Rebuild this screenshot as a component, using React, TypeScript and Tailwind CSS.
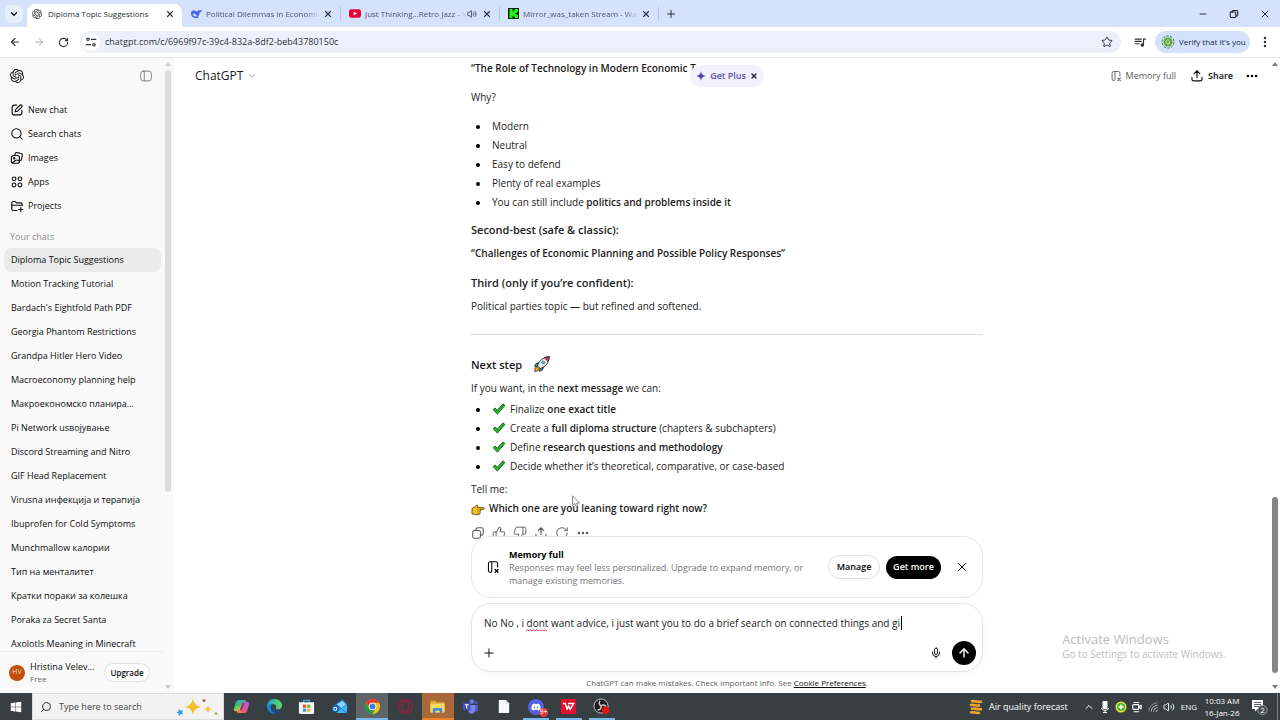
import type { ReactNode } from "react";
import {
  ArrowLeft,
  ArrowRight,
  ArrowUp,
  ChevronDown,
  ChevronUp,
  Ellipsis,
  EllipsisVertical,
  Mic,
  Minus,
  Plus,
  RotateCw,
  Search,
  Star,
  ThumbsDown,
  ThumbsUp,
  Volume2,
  X,
} from "lucide-react";
import { SiOpenai } from "react-icons/si";
import { FaDiscord, FaWindows } from "react-icons/fa";
import { MdOutlineQueueMusic } from "react-icons/md";

type IconProps = { className?: string; children: ReactNode; width?: number };

function Line({ className, children, width = 1.6 }: IconProps) {
  return (
    <svg viewBox="0 0 20 20" fill="none" stroke="currentColor" strokeWidth={width} strokeLinecap="round" strokeLinejoin="round" className={className} aria-hidden="true">
      {children}
    </svg>
  );
}

const PanelIcon = () => (
  <Line className="size-3.5" width={1.3}>
    <rect x="2.5" y="3" width="15" height="14" rx="3.5" />
    <path d="M7.5 3v14" />
  </Line>
);

const ComposeIcon = () => (
  <Line className="size-3.5">
    <path d="M9.500 3H6.600A3.600 3.600 0 0 0 3 6.600v6.800A3.600 3.600 0 0 0 6.600 17h6.800a3.600 3.600 0 0 0 3.600-3.600v-2.900" />
    <path d="M14.200 3.200a1.800 1.800 0 0 1 2.600 2.600l-5.900 5.900-3.500.9.900-3.500z" />
  </Line>
);

const ImagesIcon = () => (
  <Line className="size-3.5">
    <path d="M7 5.200 7.300 4a2.200 2.200 0 0 1 2.600-1.700l6 1.200a2.200 2.200 0 0 1 1.700 2.600l-1.200 6a2.200 2.200 0 0 1-1.400 1.700" />
    <rect x="2" y="6.500" width="11.500" height="11" rx="3" />
    <circle cx="6" cy="10.200" r="1" />
    <path d="m4 16.500 3.200-2.600c2.600-2 4.600-1 6.200.6" />
  </Line>
);

const AppsIcon = () => (
  <Line className="size-3.5">
    <circle cx="5.800" cy="5.500" r="2.700" />
    <circle cx="14.200" cy="5.500" r="2.700" />
    <circle cx="5.800" cy="14.200" r="2.700" />
    <circle cx="14.200" cy="14.200" r="2.700" />
  </Line>
);

const ProjectsIcon = () => (
  <Line className="size-3.5">
    <path d="M10 16.500H5A2.500 2.500 0 0 1 2.500 14V5.500A2 2 0 0 1 4.500 3.500h2.800l2 2H15a2.500 2.500 0 0 1 2.500 2.500v1" />
    <path d="M2.500 9h15M15.500 12v6M12.500 15h6" />
  </Line>
);

const MemoryIcon = ({ className }: { className: string }) => (
  <Line className={className} width={1.5}>
    <path d="M6.500 17.500H6a2.500 2.500 0 0 1-2.500-2.500V5A2.500 2.500 0 0 1 6 2.500h8A2.500 2.500 0 0 1 16.500 5v5" />
    <path d="M6.500 17.500A1.800 1.800 0 0 0 8.300 15.700V2.500" />
    <path d="m13 13.500 4.200 4.200m0-4.200L13 17.700" strokeWidth={1.9} />
  </Line>
);

const ShareIcon = ({ className }: { className: string }) => (
  <Line className={className}>
    <path d="M10 12.500V2.800M6 6.500l4-4 4 4M2.800 12v2.500a2.500 2.500 0 0 0 2.500 2.500h9.400a2.500 2.500 0 0 0 2.500-2.500V12" />
  </Line>
);

const CopyIcon = () => (
  <Line className="size-3.5" width={1.5}>
    <path d="M7 6.500V5a2.500 2.500 0 0 1 2.500-2.500H15A2.500 2.500 0 0 1 17.500 5v5.500A2.500 2.500 0 0 1 15 13h-1.500" />
    <rect x="2.500" y="6.500" width="11" height="11" rx="2.500" />
  </Line>
);

const CheckMark = () => (
  <svg viewBox="0 0 14 14" className="mr-1 inline-block size-3.5 align-[-3px]" aria-label="check" role="img">
    <path d="M1.200 7.800 3.100 6l2.200 2.200L11 1.900l1.900 1.500-7.400 8.700z" fill="#22b52c" stroke="#14691a" strokeWidth="1" strokeLinejoin="round" />
  </svg>
);

const Rocket = () => (
  <svg viewBox="0 0 18 18" className="ml-2 inline-block size-[18px] align-[-4px]" aria-label="rocket" role="img">
    <path d="M5.500 7.500 2.300 9.200 1.800 12l3-1zM10.700 12.500l-1.900 3.200-2.600.5.900-3.200z" fill="#1fa7c4" stroke="#222" strokeWidth=".8" strokeLinejoin="round" />
    <path d="M4 11.500c-1.700.8-2.400 2.600-2.400 4.900 2.300 0 4.100-.7 4.900-2.400z" fill="#f7a21b" stroke="#222" strokeWidth=".7" />
    <path d="M4.500 10.800C6 6.200 9.600 2 16.300 1.600 16 8.300 12 12 7.300 13.600z" fill="#e9eef2" stroke="#222" strokeWidth=".9" strokeLinejoin="round" />
    <path d="M11.400 2.900c1.500-.8 3.200-1.200 4.900-1.300-.1 1.800-.5 3.500-1.200 4.900z" fill="#e0315a" stroke="#222" strokeWidth=".6" />
    <circle cx="10.300" cy="7.500" r="1.500" fill="#46c5dc" stroke="#47606b" strokeWidth=".6" />
  </svg>
);

const PointingHand = () => (
  <svg viewBox="0 0 14 12" className="mr-1 inline-block h-3 w-3.5 align-[-4px]" aria-label="pointing right" role="img">
    <path d="M1 4.500 3.500 3l2-1.700c.8-.5 1.700.2 1.200 1L6 3.600h6.300c1.300 0 1.300 1.900 0 1.900H9c.9.300.8 1.600 0 1.800.7.400.5 1.500-.2 1.700.4.600 0 1.600-.9 1.600H4.200L1 9.800z" fill="#fcc21b" stroke="#4a3510" strokeWidth=".8" strokeLinejoin="round" />
    <path d="M6.300 5.500H9M6.300 7.300H9M6.300 9h2.400" stroke="#8a6412" strokeWidth=".6" />
  </svg>
);

const TabClose = ({ label }: { label: string }) => (
  <button aria-label={label} className="flex size-4 shrink-0 items-center justify-center text-[#27303f]">
    <X className="size-2.5" strokeWidth={2.6} />
  </button>
);

const WhaleLogo = () => (
  <svg viewBox="0 0 12 12" className="size-3 shrink-0" aria-hidden="true">
    <path d="M1 4.500C1.500 2.500 4 2 6 3c1 .6 1.700.9 2 .2.200-.8 0-1.300.6-1.500.4.900 1 .9 1.900.5.600-.3 1-.5 1.200-.3-.1 1.600-.8 2.300-2 2.700-.2 2-1 3.400-2 4.200l1.200.9c-1.500.7-2.800.3-3.900.2C2.500 9.700.6 7.200 1 4.500z" fill="#4d63f0" />
    <path d="M2.800 6.200c.6-1 2-1 3 .2.600.8.9 1.600 1.600 1.700-1.800.9-4.300-.1-4.600-1.900z" fill="#dbe5fd" />
  </svg>
);

const YoutubeLogo = () => (
  <svg viewBox="0 0 12 9" className="h-[9px] w-3 shrink-0" aria-hidden="true">
    <rect width="12" height="8.500" y=".2" rx="2.200" fill="#e8033a" />
    <path d="M4.700 2.500v3.900l3.300-2z" fill="#fff" />
  </svg>
);

const KickLogo = () => (
  <svg viewBox="0 0 11 11" className="size-[11px] shrink-0" aria-hidden="true">
    <rect width="11" height="11" fill="#06280a" />
    <path d="M1.500 1h3v2.300h1V2.200h1.200V1H10v3H8.800v1H7.600v1h1.200v1H10v3H6.700V8.800H5.500V7.700h-1V10h-3z" fill="#27f01c" />
  </svg>
);

function BrowserTab({ icon, title, audio }: { icon: ReactNode; title: string; audio?: boolean }) {
  return (
    <div className="flex w-[159px] min-w-0 items-center border-r border-[#b1c3e6] pl-2 pr-1">
      {icon}
      <a href="#" className="ml-1 min-w-0 flex-1 overflow-hidden text-[8px] leading-3 whitespace-nowrap text-[#4a5568] [mask-image:linear-gradient(to_right,black_88%,transparent)]">
        {title}
      </a>
      {audio && <Volume2 className="mr-0.5 size-2.5 shrink-0 text-[#3b4658]" strokeWidth={2.2} />}
      <TabClose label={`Close ${title}`} />
    </div>
  );
}

function TabStrip() {
  return (
    <div className="flex h-[27px] shrink-0 items-stretch bg-[#d5e2fb]">
      <div className="flex w-[27px] items-center justify-center">
        <button aria-label="Search tabs" className="flex size-[18px] items-center justify-center rounded-md bg-[#e6effd]">
          <ChevronDown className="size-2.5" strokeWidth={3} />
        </button>
      </div>
      <div className="mt-1 flex w-[155px] items-center rounded-t-lg bg-white pb-1 pl-[5px] pr-1">
        <SiOpenai className="size-2.5 shrink-0 text-[#333]" />
        <a href="#" className="ml-1.5 flex-1 text-[8px] whitespace-nowrap text-[#2b2f36]">Diploma Topic Suggestions</a>
        <TabClose label="Close tab" />
      </div>
      <div className="flex py-[7px]">
        <BrowserTab icon={<WhaleLogo />} title="Political Dilemmas in Economic" />
        <BrowserTab icon={<YoutubeLogo />} title="Just Thinking...Retro Jazz - Y" audio />
        <BrowserTab icon={<KickLogo />} title="Mirror_was_taken Stream - Wat" />
      </div>
      <button aria-label="New tab" className="flex w-6 items-center justify-center text-[#27303f]">
        <Plus className="size-3" strokeWidth={2} />
      </button>
      <div className="ml-auto flex text-[#15171c]">
        <button aria-label="Minimize" className="flex w-[31px] items-center justify-center"><Minus className="size-2.5" /></button>
        <button aria-label="Restore" className="flex w-[31px] items-center justify-center">
          <Line className="size-2.5" width={2}>
            <rect x="2.500" y="6" width="11" height="11" rx="1" />
            <path d="M6.500 6V4a1 1 0 0 1 1-1h9a1 1 0 0 1 1 1v9a1 1 0 0 1-1 1h-2.500" />
          </Line>
        </button>
        <button aria-label="Close window" className="flex w-[31px] items-center justify-center"><X className="size-3" strokeWidth={1.8} /></button>
      </div>
    </div>
  );
}

function Toolbar() {
  return (
    <div className="flex h-[31px] shrink-0 items-center border-b border-[#e1e3ea] bg-white pl-[3px]">
      <button aria-label="Back" className="flex w-6 justify-center text-[#30343b]"><ArrowLeft className="size-3" strokeWidth={2.2} /></button>
      <button aria-label="Forward" className="flex w-6 justify-center text-[#a4a7ad]"><ArrowRight className="size-3" strokeWidth={2} /></button>
      <button aria-label="Reload" className="flex w-6 justify-center text-[#30343b]"><RotateCw className="size-[11px]" strokeWidth={2.4} /></button>
      <div className="ml-[5px] flex h-[22px] flex-1 items-center rounded-full bg-[#edf0fb] pl-0.5">
        <button aria-label="Site information" className="flex size-[18px] items-center justify-center rounded-full bg-white text-[#30343b]">
          <Line className="size-3" width={2}>
            <circle cx="5" cy="5.500" r="2" />
            <path d="M10.500 5.500H18M2 14.500h7.500" />
            <circle cx="15" cy="14.500" r="2" />
          </Line>
        </button>
        <input aria-label="Address" defaultValue="chatgpt.com/c/6969f97c-39c4-832a-8df2-beb43780150c" className="ml-[5px] min-w-0 flex-1 bg-transparent text-[9px] text-[#2c3038] outline-none" />
        <button aria-label="Bookmark" className="mr-2 text-[#2c3038]"><Star className="size-3" strokeWidth={2} /></button>
      </div>
      <button aria-label="Media" className="mr-2 ml-3 text-[#2c3038]"><MdOutlineQueueMusic className="size-3.5" /></button>
      <button className="flex h-[22px] w-[95px] items-center gap-1 rounded-full bg-[#d3e1fb] pl-1.5 text-[8px] whitespace-nowrap text-[#16294f]">
        <svg viewBox="0 0 14 14" className="size-3.5 shrink-0" aria-hidden="true">
          <circle cx="7" cy="7" r="6" fill="none" stroke="#37803a" strokeWidth="1" strokeDasharray="2.500 1.200" />
          <circle cx="7" cy="7" r="4.600" fill="#64a83c" />
          <path d="M8.500 5.700a2 2 0 1 0 .5 1.500H7.400" fill="none" stroke="#d8efc8" strokeWidth=".8" />
        </svg>
        Verify that it's you
      </button>
      <button aria-label="Browser menu" className="mx-2 text-[#2c3038]"><EllipsisVertical className="size-3.5" strokeWidth={2.4} /></button>
    </div>
  );
}

const nav = [
  { label: "New chat", icon: <ComposeIcon /> },
  { label: "Search chats", icon: <Search className="size-3.5" strokeWidth={1.8} /> },
  { label: "Images", icon: <ImagesIcon /> },
  { label: "Apps", icon: <AppsIcon /> },
  { label: "Projects", icon: <ProjectsIcon /> },
];

const chats = [
  "Diploma Topic Suggestions",
  "Motion Tracking Tutorial",
  "Bardach's Eightfold Path PDF",
  "Georgia Phantom Restrictions",
  "Grandpa Hitler Hero Video",
  "Macroeconomy planning help",
  "Макроекономско планира...",
  "Pi Network usвојување",
  "Discord Streaming and Nitro",
  "GIF Head Replacement",
  "Virusna инфекција и терапија",
  "Ibuprofen for Cold Symptoms",
  "Munchmallow калории",
  "Тип на менталитет",
  "Кратки пораки за колешка",
  "Poraka za Secret Santa",
  "Axolotls Meaning in Minecraft",
];

function ScrollArrow({ up, className }: { up?: boolean; className: string }) {
  return (
    <svg viewBox="0 0 6 4" className={`h-1 w-1.5 shrink-0 ${className}`} fill="currentColor" aria-hidden="true">
      <path d={up ? "M3 0 6 4H0z" : "M0 0h6L3 4z"} />
    </svg>
  );
}

function Sidebar() {
  return (
    <aside className="flex w-[174px] shrink-0 bg-[#f9f9f9] text-[#0d0d0d]">
      <div className="flex min-w-0 flex-1 flex-col">
        <div className="flex h-[35px] shrink-0 items-center justify-between pl-2.5 pr-3">
          <a href="#" aria-label="ChatGPT home"><SiOpenai className="size-3.5" /></a>
          <button aria-label="Close sidebar" className="text-[#7a7a7a]"><PanelIcon /></button>
        </div>
        <nav className="mt-[5px] flex min-h-0 flex-1 flex-col overflow-hidden text-[9px]">
          {nav.map((n) => (
            <a key={n.label} href="#" className="flex h-6 shrink-0 items-center gap-1 pl-2.5">
              {n.icon}
              {n.label}
            </a>
          ))}
          <h2 className="mt-2 flex h-[22px] shrink-0 items-center pl-2.5 text-[#8f8f8f]">Your chats</h2>
          {chats.map((c, i) => (
            <a key={c} href="#" className={`mx-1 flex h-6 shrink-0 items-center rounded-lg pl-[7px] whitespace-nowrap ${i === 0 ? "bg-[#eaeaea]" : ""}`}>
              {c}
            </a>
          ))}
        </nav>
        <div className="flex h-[42px] shrink-0 items-center border-t border-[#efefef] pl-[9px]">
          <span className="flex size-4 shrink-0 items-center justify-center rounded-full bg-[#c2500c] text-[7px] text-[#f9dcc6]">HV</span>
          <div className="ml-[5px] w-[74px]">
            <p className="text-[9px] leading-3 whitespace-nowrap">Hristina Velev...</p>
            <p className="text-[8px] leading-3 text-[#6b6b6b]">Free</p>
          </div>
          <button className="h-[19px] w-[46px] rounded-full border border-[#e0e0e0] bg-white text-[8px] font-semibold">Upgrade</button>
        </div>
      </div>
      <div className="flex w-[9px] flex-col items-start py-1">
        <ScrollArrow up className="text-[#d0d0d0]" />
        <div className="my-1 flex-1">
          <div className="h-[69%] w-1.5 rounded-full bg-[#dcdcdc]" />
        </div>
        <ScrollArrow className="text-[#c8c8c8]" />
      </div>
    </aside>
  );
}

function ChatHeader() {
  return (
    <header className="absolute inset-x-0 top-0 flex h-[35px] items-center px-[21px]">
      <div className="flex-1">
        <button className="flex items-center gap-1 text-[12px] text-[#1c1c1c]">
          ChatGPT <ChevronDown className="size-2.5 text-[#8a8a8a]" strokeWidth={2} />
        </button>
      </div>
      <div className="flex h-[22px] items-center gap-1 rounded-full bg-[#f3f2fc] px-1.5 text-[9px] font-semibold text-[#5b50b3]">
        <svg viewBox="0 0 10 10" className="size-2.5" aria-hidden="true">
          <path d="M5 0c.5 3 1.500 4.300 5 5-3.500.7-4.500 2-5 5-.5-3-1.500-4.300-5-5 3.500-.7 4.500-2 5-5z" fill="#5145b0" />
        </svg>
        <button>Get Plus</button>
        <button aria-label="Dismiss Get Plus" className="text-[#262340]"><X className="size-2" strokeWidth={4} /></button>
      </div>
      <div className="flex flex-1 items-center justify-end text-[9px]">
        <button className="flex items-center gap-1 text-[#5d5d5d]"><MemoryIcon className="size-3" />Memory full</button>
        <button className="ml-3.5 flex items-center gap-1 font-semibold text-[#0d0d0d]"><ShareIcon className="size-3.5" />Share</button>
        <button aria-label="More options" className="ml-3"><Ellipsis className="size-3.5" strokeWidth={2.6} /></button>
      </div>
    </header>
  );
}

function Bullets({ className, items }: { className: string; items: ReactNode[] }) {
  return (
    <ul className={className}>
      {items.map((item, i) => (
        <li key={i} className="flex items-center">
          <span className="mr-3 ml-[5px] size-1 rounded-full bg-black" />
          <span>{item}</span>
        </li>
      ))}
    </ul>
  );
}

function Message() {
  return (
    <article className="mx-auto w-full max-w-[512px] pt-px text-[10px] leading-[19px] text-[#1b1b1b] [&_b]:font-semibold [&_h3]:text-[11px] [&_h3]:leading-5 [&_h3]:font-semibold">
      <p><b>“The Role of Technology in Modern Economic T</b></p>
      <p className="mt-2.5">Why?</p>
      <Bullets
        className="mt-2.5"
        items={["Modern", "Neutral", "Easy to defend", "Plenty of real examples", <>You can still include <b>politics and problems inside it</b></>]}
      />
      <h3 className="mt-2">Second-best (safe &amp; classic):</h3>
      <p className="mt-1"><b>“Challenges of Economic Planning and Possible Policy Responses”</b></p>
      <h3 className="mt-2.5">Third (only if you’re confident):</h3>
      <p className="mt-1">Political parties topic — but refined and softened.</p>
      <hr className="mt-[18px] mb-5 border-[#dcdcdc]" />
      <h3>Next step <Rocket /></h3>
      <p className="mt-1">If you want, in the <b>next message</b> we can:</p>
      <Bullets
        className="mt-0.5"
        items={[
          <><CheckMark />Finalize <b>one exact title</b></>,
          <><CheckMark />Create a <b>full diploma structure</b> (chapters &amp; subchapters)</>,
          <><CheckMark />Define <b>research questions and methodology</b></>,
          <><CheckMark />Decide whether it’s theoretical, comparative, or case-based</>,
        ]}
      />
      <p className="mt-1">Tell me:</p>
      <p><PointingHand /><b>Which one are you leaning toward right now?</b></p>
      <div className="mt-2 flex gap-[7px] text-[#5a5a5a]">
        <button aria-label="Copy"><CopyIcon /></button>
        <button aria-label="Good response"><ThumbsUp className="size-3.5" strokeWidth={1.6} /></button>
        <button aria-label="Bad response"><ThumbsDown className="size-3.5" strokeWidth={1.6} /></button>
        <button aria-label="Share response"><ShareIcon className="size-3.5" /></button>
        <button aria-label="Try again"><RotateCw className="size-3.5" strokeWidth={1.6} /></button>
        <button aria-label="More"><Ellipsis className="size-3.5" strokeWidth={2.4} /></button>
      </div>
    </article>
  );
}

function Composer() {
  return (
    <footer className="relative mx-auto -mt-2 w-full max-w-[512px] shrink-0">
      <section className="flex h-[62px] items-center rounded-[20px] border border-[#e6e6e6] bg-white pl-3.5 pr-[13px]">
        <MemoryIcon className="size-3.5 shrink-0" />
        <div className="ml-[9px] flex-1 text-[9px] leading-[13px]">
          <h4 className="font-bold text-black">Memory full</h4>
          <p className="max-w-[300px] text-[#757575]">Responses may feel less personalized. Upgrade to expand memory, or manage existing memories.</p>
        </div>
        <button className="h-6 w-[52px] rounded-full border border-[#e0e0e0] text-[9px] font-semibold">Manage</button>
        <button className="ml-1.5 h-[23px] w-[55px] rounded-full bg-black text-[9px] font-semibold whitespace-nowrap text-white">Get more</button>
        <button aria-label="Dismiss" className="ml-3.5"><X className="size-3.5" strokeWidth={1.6} /></button>
      </section>
      <form className="mt-[5px] flex h-[69px] flex-col justify-between rounded-[20px] border border-[#e3e3e3] bg-white pt-[9px] pr-1.5 pb-1.5 pl-3 shadow-[0_2px_6px_rgba(0,0,0,0.03)]">
        <div className="relative flex">
          <input aria-label="Message" spellCheck={false} defaultValue="No No , i dont want advice, i just want you to do a brief search on connected things and gi" className="h-[19px] w-full bg-transparent text-[10px] text-[#1b1b1b] outline-none" />
          <svg viewBox="0 0 22 3" className="absolute top-4 left-[42px] h-[3px] w-[22px]" fill="none" stroke="#d8465a" aria-hidden="true">
            <path d="M0 2 1.500.8 3 2 4.500.8 6 2 7.500.8 9 2 10.500.8 12 2 13.500.8 15 2 16.500.8 18 2 19.500.8 21 2" />
          </svg>
          <span className="absolute top-[3px] left-[417px] h-3.5 w-px bg-black" />
        </div>
        <div className="flex items-center justify-between">
          <button type="button" aria-label="Add files" className="-ml-0.5"><Plus className="size-3.5" strokeWidth={1.6} /></button>
          <div className="flex items-center gap-2.5">
            <button type="button" aria-label="Dictate"><Mic className="size-3" strokeWidth={1.8} /></button>
            <button type="button" aria-label="Send" className="flex size-6 items-center justify-center rounded-full bg-black text-white"><ArrowUp className="size-3.5" strokeWidth={2.4} /></button>
          </div>
        </div>
      </form>
      <p className="flex h-[21px] items-center justify-center text-[8px] whitespace-pre text-[#5d5d5d]">
        ChatGPT can make mistakes. Check important info. See <a href="#" className="text-[#0d0d0d] underline">Cookie Preferences</a>.
      </p>
    </footer>
  );
}

const CopilotLogo = () => (
  <svg viewBox="0 0 18 18" className="size-[17px]" aria-hidden="true">
    <defs>
      <linearGradient id="cp1" x1="0" y1="0" x2=".5" y2="1"><stop stopColor="#24a3ee" /><stop offset=".5" stopColor="#3cc472" /><stop offset="1" stopColor="#f6c72d" /></linearGradient>
      <linearGradient id="cp2" x1="1" y1="0" x2="0" y2="1"><stop stopColor="#a55cf2" /><stop offset=".6" stopColor="#ef4c86" /><stop offset="1" stopColor="#fb9a3c" /></linearGradient>
    </defs>
    <path d="M6 2h6c1 0 1.500.6 1.800 1.700L14.300 5H11L8.700 12.500C8.400 13.500 8 14 7 14H3C1 14 .6 12.500 1 11l2-6.500C3.500 3 4.500 2 6 2z" fill="url(#cp1)" />
    <path d="M12 16H6c-1 0-1.500-.6-1.800-1.700L3.700 13H7l2.300-7.500C9.600 4.500 10 4 11 4h4c2 0 2.400 1.500 2 3l-2 6.500c-.5 1.500-1.500 2.500-3 2.500z" fill="url(#cp2)" />
    <path d="M10.200 5.500h1.600L9 13H7.200z" fill="#373f42" opacity=".7" />
  </svg>
);

const EdgeLogo = () => (
  <svg viewBox="0 0 18 18" className="size-[17px]" aria-hidden="true">
    <defs>
      <linearGradient id="ed1" x1="0" y1=".3" x2="1" y2=".3"><stop stopColor="#1f9fe6" /><stop offset="1" stopColor="#5fdc5a" /></linearGradient>
    </defs>
    <path d="M1 8.500C1.500 4 5 1 9 1c4.500 0 8 3.200 8 7 0 2.500-2 4-4.200 4-1.800 0-2.800-.7-2.300-1.500.7-1.200.3-3.800-3-3.800C4 6.700 1.500 8 1 8.500z" fill="url(#ed1)" />
    <path d="M1 8.500C2.500 7 4.500 6 6.800 6.200 5.500 7 5 8.500 5 10c0 3.500 3 6 6.500 6.200A8 8 0 0 1 1 8.500z" fill="#1b86d6" />
    <path d="M6.700 8.500c-.8 3 1.500 5.500 4.800 5.500 2 0 3.300-.5 4.500-1.200-1 2-2.600 3.200-4.500 3.500C8 16.500 5 13.500 5 10.500c0-1 .7-1.700 1.700-2z" fill="#0d4f9f" />
  </svg>
);

const StoreLogo = () => (
  <svg viewBox="0 0 18 18" className="size-[17px]" aria-hidden="true">
    <path d="M6 5V2.500h6V5" fill="none" stroke="#38a9e8" strokeWidth="1.500" />
    <path d="M1 4.500h16V15a2 2 0 0 1-2 2H3a2 2 0 0 1-2-2z" fill="#f3f4f5" />
    <path d="M5.200 7h3.400v3.400H5.200z" fill="#e8553c" />
    <path d="M9.400 7h3.400v3.400H9.400z" fill="#7db52e" />
    <path d="M5.200 11.200h3.400v3.400H5.200z" fill="#2f9fe0" />
    <path d="M9.400 11.200h3.400v3.400H9.400z" fill="#f4b51e" />
  </svg>
);

const OutlookLogo = () => (
  <svg viewBox="0 0 18 18" className="size-[17px]" aria-hidden="true">
    <path d="M4 7 12 1l5 5v9H5z" fill="#1a70c7" />
    <path d="M6 6.500 12 3l4 3.500-5 4z" fill="#8fd3fa" />
    <path d="m5 15 12-8.500V14a2 2 0 0 1-2 2H7z" fill="#41b4f2" />
    <path d="m5 8 12 7.500" stroke="#2b8fe0" strokeWidth="1" />
    <rect x="1" y="8" width="7" height="7" rx="1.200" fill="#0f5db4" />
    <circle cx="4.500" cy="11.500" r="1.700" fill="none" stroke="#fff" strokeWidth="1.100" />
  </svg>
);

const ChromeLogo = () => (
  <svg viewBox="0 0 18 18" className="size-[17px]" aria-hidden="true">
    <circle cx="9" cy="9" r="8" fill="#fbc116" />
    <path d="M2.070 5A8 8 0 0 1 15.930 5H9a4 4 0 0 0-3.460 6z" fill="#e33b2e" />
    <path d="M2.070 5A8 8 0 0 0 9 17l3.460-6A4 4 0 0 1 5.540 11z" fill="#229a48" />
    <circle cx="9" cy="9" r="4" fill="#fff" />
    <circle cx="9" cy="9" r="3.100" fill="#3f7fe8" />
  </svg>
);

const OperaLogo = () => (
  <svg viewBox="0 0 18 18" className="size-[17px]" fill="none" stroke="#93213d" aria-hidden="true">
    <circle cx="9" cy="9" r="7.400" strokeWidth="1.500" />
    <ellipse cx="9" cy="9" rx="3.400" ry="5.600" strokeWidth="1.600" />
  </svg>
);

const FolderLogo = () => (
  <svg viewBox="0 0 18 18" className="size-[17px]" aria-hidden="true">
    <path d="M1.500 3h5l1.500 1.500h8.500V15h-15z" fill="#e5a92c" />
    <path d="M1.500 6h15v9.500h-15z" fill="#fbd768" />
    <path d="M4 16v-4a1.500 1.500 0 0 1 1.500-1.500h7A1.500 1.500 0 0 1 14 12v4h-2.500v-2.500h-5V16z" fill="#3d8fd0" />
  </svg>
);

const TeamsLogo = () => (
  <svg viewBox="0 0 18 18" className="size-[17px]" aria-hidden="true">
    <circle cx="10.500" cy="3.800" r="2.500" fill="#6f78d8" />
    <circle cx="15" cy="5" r="1.700" fill="#5059c9" />
    <path d="M13 7.500h4V12a2.500 2.500 0 0 1-4 2z" fill="#5059c9" />
    <path d="M7 7.500h7v5a4 4 0 0 1-7 2.700z" fill="#7b83eb" />
    <rect x="1" y="5" width="8" height="8" rx="1" fill="#464eb8" />
    <path d="M3 7.200h4M5 7.200V11" stroke="#fff" strokeWidth="1.200" />
  </svg>
);

const FileLogo = () => (
  <svg viewBox="0 0 18 18" className="size-[17px]" aria-hidden="true">
    <path d="M4 2h7.500L15 5.500V16H4z" fill="#f8f9fa" />
    <path d="M11.500 2v3.500H15z" fill="#c3c8cc" />
  </svg>
);

const DiscordLogo = () => (
  <span className="relative flex size-4 items-center justify-center rounded-full bg-[#5462e2] text-white">
    <FaDiscord className="size-2.5" />
    <span className="absolute -right-1 -bottom-0.5 flex size-[9px] items-center justify-center rounded-full bg-[#dd3c3c] text-[7px]">9+</span>
  </span>
);

const WpsLogo = () => (
  <svg viewBox="0 0 18 18" className="size-[17px]" aria-hidden="true">
    <rect x="1" y="1" width="16" height="16" rx="1.500" fill="#e8102f" />
    <path d="M3 5.800h2.500L7.600 12 9 8.200 10.700 12l3.800-6.200H8.500" fill="none" stroke="#fff" strokeWidth="1.600" strokeLinejoin="round" />
  </svg>
);

const ObsLogo = () => (
  <svg viewBox="0 0 18 18" className="size-[17px]" aria-hidden="true">
    <circle cx="8.500" cy="8.500" r="7.500" fill="#1d1d20" stroke="#c9c9cc" strokeWidth="1" />
    <path d="M8.700 8.200C6.500 7.500 5.800 5 7.500 3M8.700 8.300c1.700-1.700 4.300-1 5 1.200M8.500 8.500c.5 2.400-1.300 4.400-3.700 4" fill="none" stroke="#c9c9cc" strokeWidth="1.600" />
    <circle cx="13.500" cy="13" r="3.900" fill="#e8140f" />
  </svg>
);

const apps: { name: string; icon: ReactNode; cell: string }[] = [
  { name: "Copilot", icon: <CopilotLogo />, cell: "border-transparent" },
  { name: "Edge", icon: <EdgeLogo />, cell: "border-transparent" },
  { name: "Store", icon: <StoreLogo />, cell: "border-transparent" },
  { name: "Outlook", icon: <OutlookLogo />, cell: "border-transparent" },
  { name: "Chrome", icon: <ChromeLogo />, cell: "w-8 border-[#79b8ea] bg-[#5d6566]" },
  { name: "Opera GX", icon: <OperaLogo />, cell: "border-transparent" },
  { name: "File Explorer", icon: <FolderLogo />, cell: "w-8 border-[#f28322] bg-[#a9683a]" },
  { name: "Teams", icon: <TeamsLogo />, cell: "border-transparent" },
  { name: "Document", icon: <FileLogo />, cell: "border-transparent" },
  { name: "Discord", icon: <DiscordLogo />, cell: "w-[26px] border-[#79b8ea]" },
  { name: "WPS Office", icon: <WpsLogo />, cell: "w-[26px] border-[#79b8ea]" },
  { name: "OBS Studio", icon: <ObsLogo />, cell: "w-[26px] border-[#79b8ea]" },
];

function Taskbar() {
  return (
    <div className="flex h-[27px] shrink-0 items-stretch bg-[#373f42] text-white">
      <button aria-label="Start" className="flex w-8 items-center justify-center"><FaWindows className="size-3" /></button>
      <label className="flex w-[192px] items-center border border-[#dcdcdc] bg-[#f2f2f2] pl-[7px] text-[#333]">
        <Search className="size-3 -scale-x-100" strokeWidth={2} />
        <input aria-label="Search" placeholder="Type here to search" className="ml-[7px] w-[117px] bg-transparent text-[9px] outline-none placeholder:text-[#444]" />
        <svg viewBox="0 0 42 20" className="h-5 w-[42px]" aria-hidden="true">
          <path d="M17 1c1 5.500 2.500 7.500 8 9-5.500 1.500-7 3-8 8-1-5-2.500-6.500-8-8 5.500-1.500 7-3.500 8-9z" fill="#f6be2c" />
          <path d="M32 8c.5 2.600 1.300 3.500 4 4.200-2.700.7-3.500 1.500-4 4.200-.5-2.700-1.300-3.500-4-4.200 2.700-.7 3.500-1.600 4-4.200z" fill="#f6c440" />
          <path d="m3 12 1.500 1.800L7 13l-1 2.300 1.200 2-2.500-.3L3 19l-.5-2.400L.5 15.300l2-.9z" fill="#3399dc" />
          <circle cx="28" cy="3.500" r="1.500" fill="#c9583c" />
          <circle cx="40" cy="16.500" r="1.200" fill="#82b54b" />
        </svg>
      </label>
      <div className="ml-px grid w-[393px] grid-cols-12">
        {apps.map((a) => (
          <div key={a.name} className="flex justify-center">
            <button aria-label={a.name} className={`flex items-center justify-center border-b-2 pt-0.5 ${a.cell}`}>{a.icon}</button>
          </div>
        ))}
      </div>
      <div className="ml-auto flex items-center text-[9px]">
        <button className="flex items-center gap-1.5 whitespace-nowrap">
          <svg viewBox="0 0 14 16" className="h-4 w-3.5" fill="none" stroke="#f0a430" strokeWidth="2.600" aria-hidden="true">
            <path d="M2 2.500c4-1.500 6 1.500 11 0M1 6.200c4-1.500 6 1.500 10 0M2 9.900c4-1.500 6 1.500 11 0M1 13.600c4-1.500 6 1.500 10 0" />
          </svg>
          Air quality forecast
        </button>
        <div className="ml-[15px] flex items-center gap-1">
          <button aria-label="Show hidden icons"><ChevronUp className="size-3" /></button>
          <svg viewBox="0 0 12 12" className="size-3" aria-hidden="true"><rect x="3.500" y="0" width="5" height="8" rx="1" fill="#fff" /><path d="M2.500 7c0 3 7 3 7 0M6 9v3M4 11.500h4" stroke="#fff" fill="none" /></svg>
          <svg viewBox="0 0 12 12" className="size-3" aria-hidden="true"><circle cx="6" cy="6" r="5.500" fill="#e8e535" /><circle cx="6" cy="6" r="4" fill="#4eb233" /><path d="M6 3.500v5M3.500 6h5" stroke="#fff" strokeWidth="1.500" /></svg>
          <Line className="size-3" width={1.8}><rect x="3" y="6" width="10" height="8" rx="1.500" /><path d="m13 9 4-2v6l-4-2M5 2.500h8M5 18h8" /></Line>
          <Line className="size-3" width={1.5}><path d="M3 17A14 14 0 0 1 17 3" stroke="#8e9496" /><path d="M7 17A10 10 0 0 1 17 7M11 17a6 6 0 0 1 6-6" stroke="#c5c9ca" /><path d="M15.500 17a2 2 0 0 1 1.500-1.500" /></Line>
          <Volume2 className="size-3" strokeWidth={1.8} />
        </div>
        <button className="ml-1.5 text-[8px]">ENG</button>
        <div className="ml-[7px] w-9 text-center text-[8px] leading-3 whitespace-nowrap">
          <p>10:03 AM</p>
          <p>16-Jan-26</p>
        </div>
        <button aria-label="Notifications" className="mr-[9px] ml-2.5 flex">
          <svg viewBox="0 0 18 18" className="size-[18px]" aria-hidden="true">
            <path d="M2 2h11v9H7.500L5 13.500V11H2z" fill="#fff" />
            <path d="M4 4.500h7M4 6.500h7M4 8.500h5" stroke="#596164" />
            <circle cx="12.500" cy="12" r="4.700" fill="#454c50" stroke="#a5abae" strokeWidth=".8" />
            <text x="12.500" y="14.800" textAnchor="middle" fontSize="8" fill="#fff">2</text>
          </svg>
        </button>
        <span className="h-[27px] w-[3px] border-l border-[#7f8688]" />
      </div>
    </div>
  );
}

export default function App() {
  return (
    <div className="flex h-screen flex-col overflow-hidden bg-white font-['Open_Sans','Noto_Sans',sans-serif]">
      <TabStrip />
      <Toolbar />
      <div className="flex min-h-0 flex-1">
        <Sidebar />
        <main className="relative flex min-w-0 flex-1 flex-col">
          <div className="min-h-0 flex-1 overflow-hidden"><Message /></div>
          <Composer />
          <ChatHeader />
          <svg viewBox="0 0 8 13" className="absolute top-[437px] left-[398px] h-[13px] w-2" aria-hidden="true">
            <path d="M.5.700v10L3 8.500l1.500 3.700 1.400-.6L4.500 8H7.500z" fill="#fff" stroke="#555" strokeWidth=".7" />
          </svg>
          <div className="absolute right-[54px] bottom-[32px] text-[#bdbdbd]">
            <p className="text-[13px] leading-4">Activate Windows</p>
            <p className="text-[10px] leading-[14px]">Go to Settings to activate Windows.</p>
          </div>
          <div className="absolute inset-y-0 right-0 flex w-2.5 flex-col items-center justify-between py-1">
            <ScrollArrow up className="text-[#7b7b7b]" />
            <div className="flex flex-1 flex-col justify-end pb-3">
              <div className="h-[29%] w-1.5 rounded-full bg-[#858585]" />
            </div>
            <ScrollArrow className="text-[#7b7b7b]" />
          </div>
        </main>
      </div>
      <Taskbar />
    </div>
  );
}
